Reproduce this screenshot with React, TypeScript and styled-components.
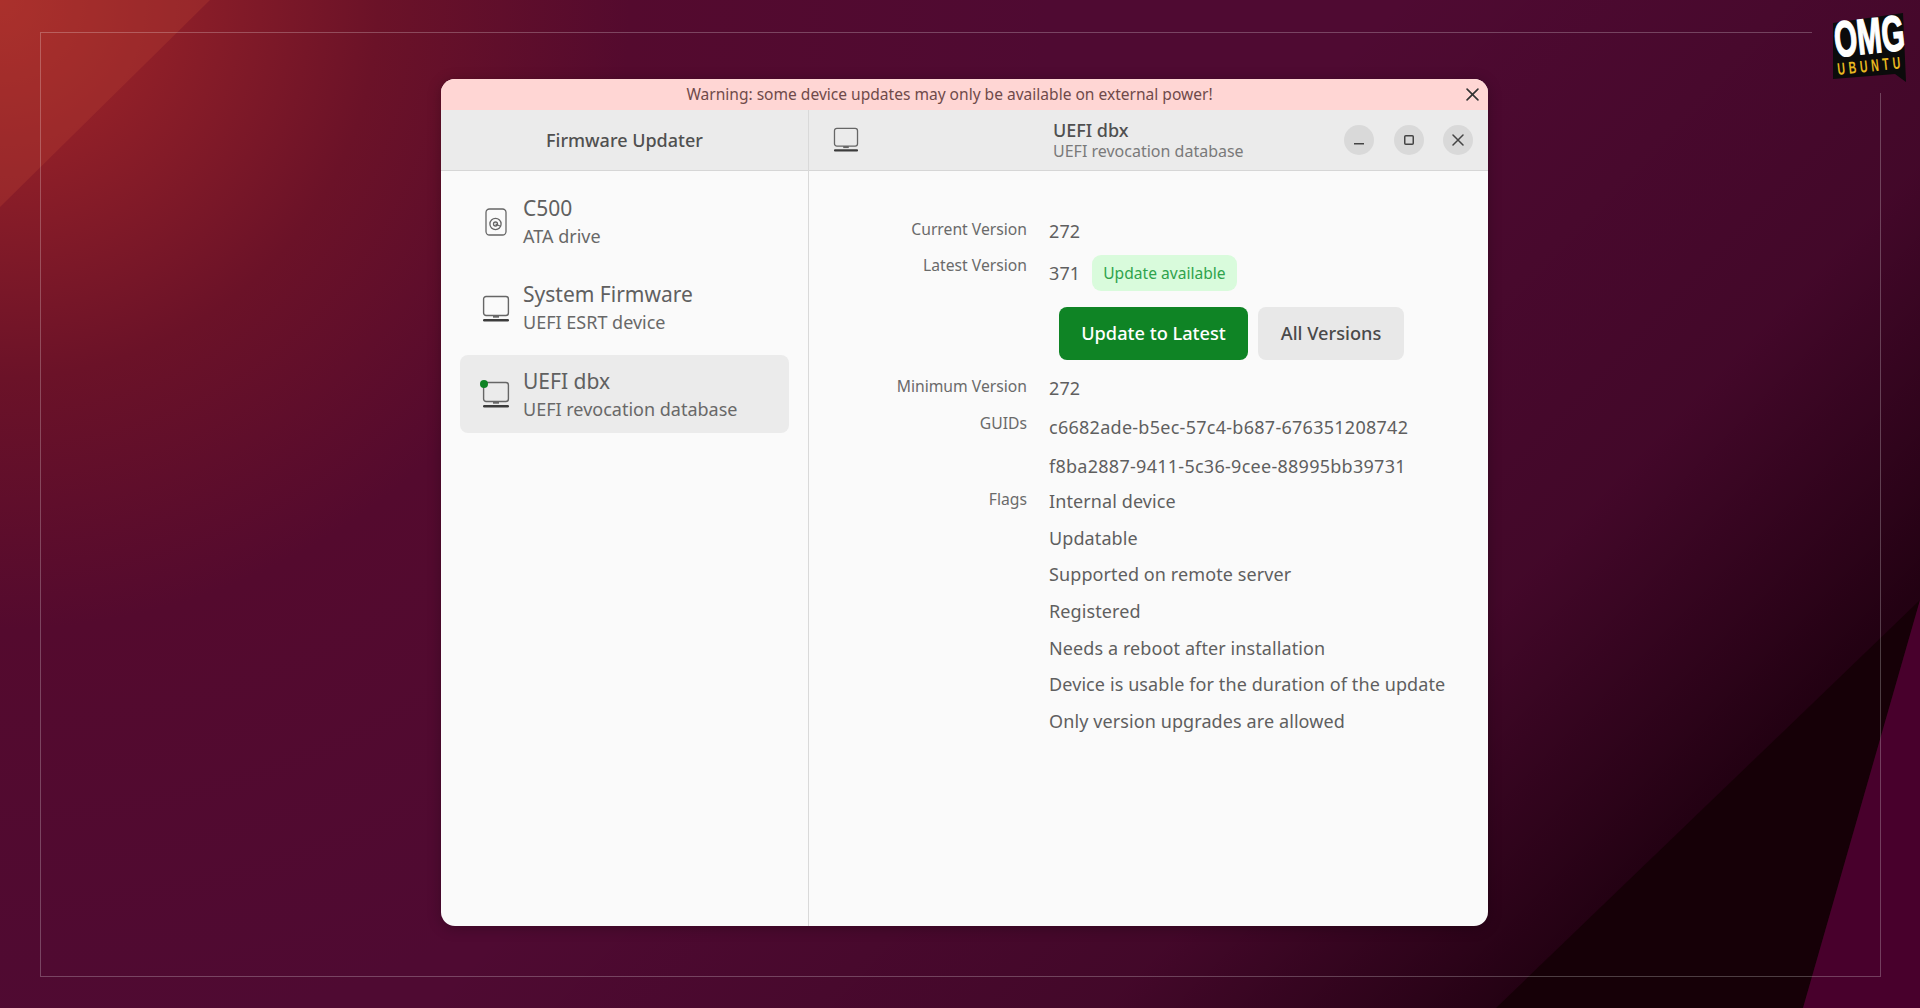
import React from "react";
import styled, { createGlobalStyle } from "styled-components";

const Global = createGlobalStyle`
  html, body { margin: 0; padding: 0; }
  body { font-family: "Noto Sans", "Open Sans", sans-serif; }
  #root { width: 1920px; height: 1008px; overflow: hidden; }
`;

const Page = styled.div`
  position: relative;
  width: 1920px;
  height: 1008px;
  box-sizing: border-box;
  padding: 79px 0 0 441px;
  overflow: hidden;
  background:
    linear-gradient(134deg, rgba(30, 0, 15, 0) 48%, rgba(30, 0, 15, 0.25) 72%, rgba(30, 0, 15, 0.7) 82%, rgba(30, 0, 15, 0.9) 86%),
    radial-gradient(circle 1050px at 0 0, #a82b2a 0%, #8f1f28 15%, #6b1228 36%, #540a2e 60%, rgba(80, 10, 50, 0) 100%),
    #4f0a32;
`;

const Wallpaper = styled.svg`
  position: absolute;
  inset: 0;
  width: 1920px;
  height: 1008px;
`;

const Frame = styled.div`
  position: absolute;
  left: 40px;
  top: 32px;
  width: 1839px;
  height: 943px;
  border: 1px solid rgba(255, 255, 255, 0.24);
  clip-path: polygon(0 0, 1772px 0, 1772px 61px, 100% 61px, 100% 100%, 0 100%);
`;

const Logo = styled.svg`
  position: absolute;
  left: 1830px;
  top: 10px;
  width: 80px;
  height: 76px;
  overflow: visible;
`;

const Window = styled.div`
  position: relative;
  width: 1047px;
  height: 847px;
  border-radius: 14px;
  overflow: hidden;
  background: #fafafa;
  display: flex;
  flex-direction: column;
  box-shadow: 0 2px 14px rgba(0, 0, 0, 0.25);
`;

const Banner = styled.div`
  height: 31px;
  flex: none;
  box-sizing: border-box;
  padding: 0 8px 1px 0;
  background: #ffd6d4;
  color: #6f4a4a;
  font-size: 15.55px;
  display: flex;
  align-items: center;
  gap: 6px;
`;

const BannerText = styled.div`
  flex: 1;
  text-align: center;
`;

const BannerClose = styled.button`
  border: 0;
  background: none;
  padding: 0;
  width: 16px;
  height: 16px;
  color: #333;
  display: flex;
  align-items: center;
  justify-content: center;
`;

const Columns = styled.div`
  flex: 1;
  display: flex;
  min-height: 0;
`;

const Sidebar = styled.aside`
  width: 367px;
  flex: none;
  display: flex;
  flex-direction: column;
  border-right: 1px solid #d9d9d9;
`;

const Header = styled.header`
  height: 61px;
  flex: none;
  box-sizing: border-box;
  background: #ebebeb;
  border-bottom: 1px solid #d6d6d6;
  display: flex;
  align-items: center;
`;

const SidebarTitle = styled.div`
  flex: 1;
  text-align: center;
  font-size: 18px;
  font-weight: 500;
  color: #505050;
`;

const DeviceList = styled.ul`
  list-style: none;
  margin: 0;
  padding: 11px 19px;
  display: flex;
  flex-direction: column;
  gap: 8.5px;
`;

const DeviceRow = styled.li<{ $active?: boolean }>`
  height: 78px;
  border-radius: 8px;
  display: flex;
  align-items: center;
  background: ${(p) => (p.$active ? "#ebebeb" : "transparent")};
`;

const DeviceIconSlot = styled.div`
  position: relative;
  width: 28px;
  margin: 2px 13px 0 22px;
  flex: none;
  display: flex;
  justify-content: center;
  color: #666;
`;

const StatusDot = styled.span`
  position: absolute;
  left: -2px;
  top: -1px;
  width: 8px;
  height: 8px;
  border-radius: 50%;
  background: #0f8425;
`;

const DeviceText = styled.div`
  display: flex;
  flex-direction: column;
  gap: 3px;
`;

const DeviceName = styled.div`
  font-size: 21px;
  line-height: 26px;
  color: #606060;
`;

const DeviceSub = styled.div`
  font-size: 18px;
  line-height: 24px;
  color: #686868;
`;

const Main = styled.main`
  flex: 1;
  display: flex;
  flex-direction: column;
  min-width: 0;
`;

const MainHeader = styled(Header)`
  padding-left: 24px;
  padding-right: 15px;
`;

const HeaderIcon = styled.div`
  width: 26px;
  color: #666;
  display: flex;
`;

const HeaderText = styled.div`
  margin-left: 194px;
  flex: 1;
  display: flex;
  flex-direction: column;
`;

const HeaderTitle = styled.div`
  font-size: 18px;
  line-height: 22px;
  font-weight: 500;
  color: #505050;
`;

const HeaderSub = styled.div`
  font-size: 16px;
  line-height: 20px;
  color: #7a7a7a;
`;

const WindowControls = styled.div`
  display: flex;
  gap: 19.5px;
`;

const WindowButton = styled.button`
  width: 30px;
  height: 30px;
  border-radius: 50%;
  border: 0;
  padding: 0;
  background: #d9d9d9;
  color: #444;
  display: flex;
  align-items: center;
  justify-content: center;
`;

const Details = styled.div`
  padding: 48px 0 0 0;
  display: grid;
  grid-template-columns: 218px 1fr;
  column-gap: 22px;
  align-items: start;
`;

const Label = styled.div<{ $lift?: number }>`
  grid-column: 1;
  text-align: right;
  font-size: 15.7px;
  line-height: 20px;
  color: #6a6a6a;
  margin-top: ${(p) => -(p.$lift ?? 0)}px;
`;

const Values = styled.div<{ $gap?: number; $after?: number }>`
  grid-column: 2;
  display: flex;
  flex-direction: column;
  gap: ${(p) => p.$gap ?? 0}px;
  margin-bottom: ${(p) => p.$after ?? 0}px;
`;

const Value = styled.div`
  font-size: 18px;
  line-height: 24px;
  letter-spacing: 0.1px;
  color: #5f5f5f;
`;

const GuidValue = styled(Value)`
  letter-spacing: 0.27px;
`;

const VersionLine = styled.div`
  display: flex;
  align-items: center;
  gap: 12px;
`;

const Badge = styled.div`
  height: 36px;
  padding: 0 11px;
  border-radius: 9px;
  background: #d9fbdc;
  color: #2fa34c;
  font-size: 15.6px;
  display: flex;
  align-items: center;
`;

const Actions = styled.div`
  grid-column: 2;
  display: flex;
  gap: 10px;
  margin: 0 0 16px 10px;
`;

const ActionButton = styled.button<{ $primary?: boolean }>`
  height: 53px;
  width: ${(p) => (p.$primary ? 189 : 146)}px;
  border: 0;
  border-radius: 8px;
  padding: 0 0 2px;
  font-family: inherit;
  font-size: 18.2px;
  font-weight: 500;
  color: ${(p) => (p.$primary ? "#fff" : "#4a4a4a")};
  background: ${(p) => (p.$primary ? "#0f8425" : "#e8e8e8")};
`;

const Monitor = ({ size = 28 }: { size?: number }) => (
  <svg width={size} height={size} viewBox="0 0 28 28" fill="none">
    <rect x="1.6" y="1.5" width="24.8" height="19" rx="2.5" stroke="currentColor" strokeWidth="1.4" />
    <rect x="11" y="20.5" width="6" height="2.2" fill="currentColor" />
    <rect x="1" y="24" width="26" height="2.4" rx="1.2" fill="#3c3c3c" />
  </svg>
);

const Drive = () => (
  <svg width="22" height="28" viewBox="0 0 22 28" fill="none" stroke="currentColor">
    <rect x="1" y="1" width="20" height="26" rx="3.5" strokeWidth="1.3" />
    <circle cx="10.5" cy="16" r="5.6" strokeWidth="1.3" />
    <circle cx="10.5" cy="16" r="2" strokeWidth="1.3" />
    <path d="M10.5 16 L16 18.5" strokeWidth="1.3" />
  </svg>
);

const Cross = ({ size = 12 }: { size?: number }) => (
  <svg width={size} height={size} viewBox="0 0 12 12" fill="none" stroke="currentColor" strokeWidth="1.5" strokeLinecap="round">
    <path d="M1 1 L11 11 M11 1 L1 11" />
  </svg>
);

const flags = [
  "Internal device",
  "Updatable",
  "Supported on remote server",
  "Registered",
  "Needs a reboot after installation",
  "Device is usable for the duration of the update",
  "Only version upgrades are allowed",
];

const logoFont = "'Liberation Sans', sans-serif";

export default function App() {
  return (
    <Page>
      <Global />
      <Wallpaper viewBox="0 0 1920 1008">
        <polygon points="0,0 210,0 0,207" fill="#b03a30" opacity="0.4" />
        <polygon points="1920,600 1803,1008 1496,1008" fill="#160007" />
        <polygon points="1920,600 1920,1008 1803,1008" fill="#48002c" />
      </Wallpaper>
      <Frame />
      <Logo viewBox="0 0 80 76">
        <polygon points="3,13 73,3 76,72 65,64 3,69" fill="#0b0b0b" />
        <text
          transform="translate(6 47) rotate(-6) scale(0.59 1)"
          fontFamily={logoFont}
          fontWeight="700"
          fontSize="50"
          fill="#fff"
          stroke="#fff"
          strokeWidth="1.5"
        >
          OMG
        </text>
        <text
          transform="translate(8 65) rotate(-6) scale(0.62 1)"
          fontFamily={logoFont}
          fontWeight="700"
          fontSize="17"
          letterSpacing="6"
          fill="#e8b820"
        >
          UBUNTU
        </text>
      </Logo>
      <Window>
        <Banner>
          <BannerText>Warning: some device updates may only be available on external power!</BannerText>
          <BannerClose aria-label="Close"><Cross size={13} /></BannerClose>
        </Banner>
        <Columns>
          <Sidebar>
            <Header><SidebarTitle>Firmware Updater</SidebarTitle></Header>
            <DeviceList>
              <DeviceRow>
                <DeviceIconSlot><Drive /></DeviceIconSlot>
                <DeviceText><DeviceName>C500</DeviceName><DeviceSub>ATA drive</DeviceSub></DeviceText>
              </DeviceRow>
              <DeviceRow>
                <DeviceIconSlot><Monitor /></DeviceIconSlot>
                <DeviceText><DeviceName>System Firmware</DeviceName><DeviceSub>UEFI ESRT device</DeviceSub></DeviceText>
              </DeviceRow>
              <DeviceRow $active>
                <DeviceIconSlot><Monitor /><StatusDot /></DeviceIconSlot>
                <DeviceText><DeviceName>UEFI dbx</DeviceName><DeviceSub>UEFI revocation database</DeviceSub></DeviceText>
              </DeviceRow>
            </DeviceList>
          </Sidebar>
          <Main>
            <MainHeader>
              <HeaderIcon><Monitor size={26} /></HeaderIcon>
              <HeaderText>
                <HeaderTitle>UEFI dbx</HeaderTitle>
                <HeaderSub>UEFI revocation database</HeaderSub>
              </HeaderText>
              <WindowControls>
                <WindowButton aria-label="Minimize">
                  <svg width="12" height="12" viewBox="0 0 12 12"><rect x="1" y="9" width="10" height="1.5" fill="currentColor" /></svg>
                </WindowButton>
                <WindowButton aria-label="Maximize">
                  <svg width="12" height="12" viewBox="0 0 12 12" fill="none"><rect x="1.75" y="1.75" width="8.5" height="8.5" rx="1" stroke="currentColor" strokeWidth="1.5" /></svg>
                </WindowButton>
                <WindowButton aria-label="Close"><Cross /></WindowButton>
              </WindowControls>
            </MainHeader>
            <Details>
              <Label>Current Version</Label>
              <Values $after={12}><Value>272</Value></Values>
              <Label>Latest Version</Label>
              <Values $after={16}>
                <VersionLine><Value>371</Value><Badge>Update available</Badge></VersionLine>
              </Values>
              <Actions>
                <ActionButton $primary>Update to Latest</ActionButton>
                <ActionButton>All Versions</ActionButton>
              </Actions>
              <Label>Minimum Version</Label>
              <Values $after={14.5}><Value>272</Value></Values>
              <Label $lift={2}>GUIDs</Label>
              <Values $gap={15} $after={11.5}>
                <GuidValue>c6682ade-b5ec-57c4-b687-676351208742</GuidValue>
                <GuidValue>f8ba2887-9411-5c36-9cee-88995bb39731</GuidValue>
              </Values>
              <Label>Flags</Label>
              <Values $gap={12.7}>
                {flags.map((f) => <Value key={f}>{f}</Value>)}
              </Values>
            </Details>
          </Main>
        </Columns>
      </Window>
    </Page>
  );
}
